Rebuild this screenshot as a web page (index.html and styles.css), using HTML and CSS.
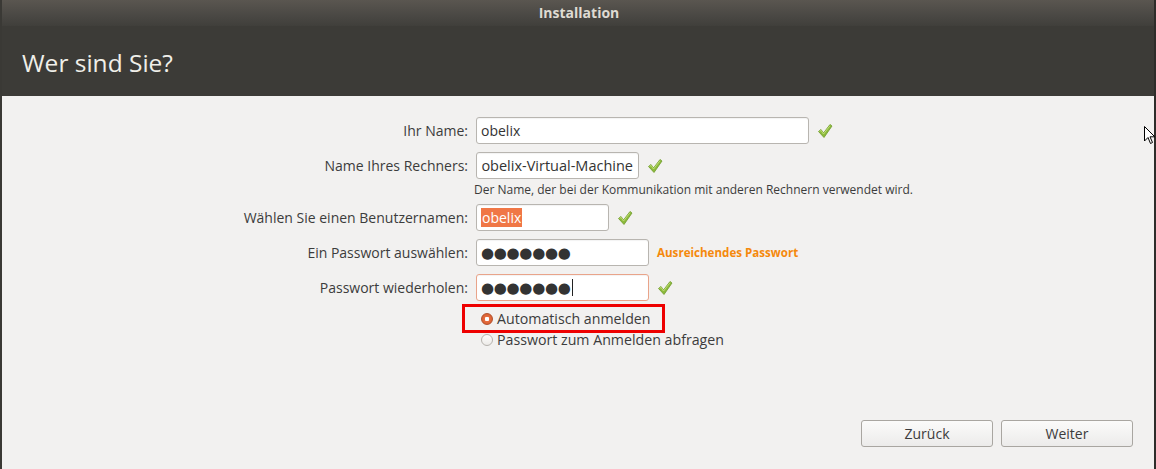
FILE: index.html
```html
<!DOCTYPE html>
<html lang="de">
<head>
<meta charset="utf-8">
<title>Installation</title>
<link rel="stylesheet" href="styles.css">
</head>
<body>
<div class="window">
  <div class="titlebar">Installation</div>
  <div class="header"><h1>Wer sind Sie?</h1></div>
  <div class="content">
    <div class="form">
      <label class="lbl">Ihr Name:</label>
      <div class="field">
        <div class="input w-name">obelix</div>
        <svg class="check" viewBox="0 0 16 16"><path d="M1.5 8.5 L4 6.5 L6.5 10 L13 1.5 L15 3 L7 14.5 Z" fill="#8dbb3c" stroke="#6e9a2a" stroke-width="0.8" stroke-linejoin="round"/><path d="M2.6 8.4 L4 7.4 L6.5 11 L13 2.7" fill="none" stroke="#c4e07a" stroke-width="0.9"/></svg>
      </div>

      <label class="lbl">Name Ihres Rechners:</label>
      <div class="field">
        <div class="input w-host scrolled"><span>obelix-Virtual-Machine</span></div>
        <svg class="check" viewBox="0 0 16 16"><path d="M1.5 8.5 L4 6.5 L6.5 10 L13 1.5 L15 3 L7 14.5 Z" fill="#8dbb3c" stroke="#6e9a2a" stroke-width="0.8" stroke-linejoin="round"/><path d="M2.6 8.4 L4 7.4 L6.5 11 L13 2.7" fill="none" stroke="#c4e07a" stroke-width="0.9"/></svg>
      </div>
      <span></span>
      <div class="hint">Der Name, der bei der Kommunikation mit anderen Rechnern verwendet wird.</div>

      <label class="lbl">Wählen Sie einen Benutzernamen:</label>
      <div class="field">
        <div class="input w-user"><span class="sel">obelix</span></div>
        <svg class="check" viewBox="0 0 16 16"><path d="M1.5 8.5 L4 6.5 L6.5 10 L13 1.5 L15 3 L7 14.5 Z" fill="#8dbb3c" stroke="#6e9a2a" stroke-width="0.8" stroke-linejoin="round"/><path d="M2.6 8.4 L4 7.4 L6.5 11 L13 2.7" fill="none" stroke="#c4e07a" stroke-width="0.9"/></svg>
      </div>

      <label class="lbl">Ein Passwort auswählen:</label>
      <div class="field">
        <div class="input w-pass"><span class="dots">●●●●●●●</span></div>
        <span class="strength">Ausreichendes Passwort</span>
      </div>

      <label class="lbl">Passwort wiederholen:</label>
      <div class="field">
        <div class="input w-pass focus"><span class="dots">●●●●●●●</span><span class="caret"></span></div>
        <svg class="check" viewBox="0 0 16 16"><path d="M1.5 8.5 L4 6.5 L6.5 10 L13 1.5 L15 3 L7 14.5 Z" fill="#8dbb3c" stroke="#6e9a2a" stroke-width="0.8" stroke-linejoin="round"/><path d="M2.6 8.4 L4 7.4 L6.5 11 L13 2.7" fill="none" stroke="#c4e07a" stroke-width="0.9"/></svg>
      </div>

      <span></span>
      <div class="radios">
        <div class="radio-box">
          <div class="radio"><span class="dot on"></span>Automatisch anmelden</div>
        </div>
        <div class="radio"><span class="dot"></span>Passwort zum Anmelden abfragen</div>
      </div>
    </div>

    <div class="buttons">
      <button class="btn">Zurück</button>
      <button class="btn">Weiter</button>
    </div>
  </div>
  <svg class="cursor" viewBox="0 0 12 20" width="12" height="20"><path d="M0.5 0.5 L0.5 15 L4 11.5 L6.5 17.5 L8.5 16.5 L6 10.8 L10.8 10.8 Z" fill="#fff" stroke="#000" stroke-width="1" stroke-linejoin="miter"/></svg>
</div>
</body>
</html>
```
FILE: styles.css
```css
* { box-sizing: border-box; }
html, body { margin: 0; padding: 0; }
body {
  width: 1156px;
  height: 469px;
  overflow: hidden;
  font-family: "Open Sans", "Noto Sans", "DejaVu Sans", sans-serif;
  background: #f2f1f0;
}
.window {
  position: relative;
  width: 1156px;
  height: 469px;
  border-left: 2px solid #3a3935;
  border-right: 2px solid #2e2d2a;
  background: #f2f1f0;
  display: flex;
  flex-direction: column;
}
.titlebar {
  height: 26px;
  background: linear-gradient(#5a5650, #4a4844 60%, #403f3b);
  color: #dfdbd2;
  font-weight: bold;
  font-size: 14px;
  text-align: center;
  line-height: 25px;
  padding-left: 2px;
}
.header {
  height: 70px;
  background: #3c3b37;
  display: flex;
  align-items: center;
  padding-left: 20px;
}
.header h1 {
  margin: 0;
  font-weight: normal;
  font-size: 24.5px;
  color: #f0efe9;
  padding-top: 2px;
}
.content {
  flex: 1;
  display: flex;
  flex-direction: column;
  justify-content: space-between;
  padding: 21px 21px 22px 0;
}
.form {
  display: grid;
  grid-template-columns: 466px auto;
  column-gap: 8px;
  row-gap: 8px;
  align-items: center;
}
.lbl {
  text-align: right;
  font-size: 14px;
  line-height: 18px;
  color: #3c3c3c;
}
.field {
  display: flex;
  align-items: center;
  gap: 8px;
}
.input {
  height: 27px;
  border: 1px solid #b8b5b0;
  border-radius: 3px;
  background: #fff;
  font-size: 14px;
  color: #333;
  padding: 0 4px;
  display: flex;
  align-items: center;
  overflow: hidden;
  white-space: nowrap;
  box-shadow: inset 0 1px 1px rgba(0,0,0,0.05);
}
.w-name { width: 333px; }
.w-host { width: 163px; }
.w-user { width: 133px; }
.w-pass { width: 173px; }
.scrolled { justify-content: flex-end; padding-right: 5px; font-size: 14.5px; }
.focus { border-color: #e9a48a; }
.sel {
  background: #f07746;
  color: #fff;
  padding: 0 1px;
  line-height: 19px;
}
.dots {
  font-size: 15px;
  letter-spacing: -0.3px;
  color: #333;
  font-family: "DejaVu Sans", sans-serif;
  line-height: 18px;
}
.caret {
  display: inline-block;
  width: 1px;
  height: 17px;
  background: #222;
  margin-left: 1px;
}
.check { width: 16px; height: 16px; }
.strength {
  color: #f5890c;
  font-weight: bold;
  font-size: 11.6px;
}
.hint {
  font-size: 12px;
  line-height: 16px;
  color: #3c3c3c;
  margin-top: -5px;
  margin-bottom: -2px;
  margin-left: -2px;
}
.radios {
  display: flex;
  flex-direction: column;
  margin-left: -14px;
  margin-top: -5px;
}
.radio-box {
  border: 3px solid #ee0000;
  width: 203px;
  height: 29px;
  display: flex;
  align-items: center;
  padding-left: 16px;
}
.radio {
  display: flex;
  align-items: center;
  font-size: 14.2px;
  line-height: 18px;
  color: #3c3c3c;
  gap: 4px;
}
.radios > .radio { padding-left: 19px; margin-top: -2px; }
.dot {
  width: 12px;
  height: 12px;
  border-radius: 50%;
  border: 1px solid #b6b3ae;
  background: linear-gradient(#fff, #eceae7);
  display: inline-block;
}
.dot.on {
  border-color: #b2502c;
  background: radial-gradient(circle, #fff 0 2px, #e66d3f 2.5px, #d0582a);
}
.buttons {
  display: flex;
  justify-content: flex-end;
  gap: 8px;
}
.btn {
  width: 132px;
  height: 27px;
  border: 1px solid #a9a6a1;
  border-radius: 3px;
  background: linear-gradient(#fbfbfa, #ecebea);
  font-family: inherit;
  font-size: 14px;
  color: #3c3c3c;
}
.cursor {
  position: absolute;
  left: 1142px;
  top: 126px;
}
```
